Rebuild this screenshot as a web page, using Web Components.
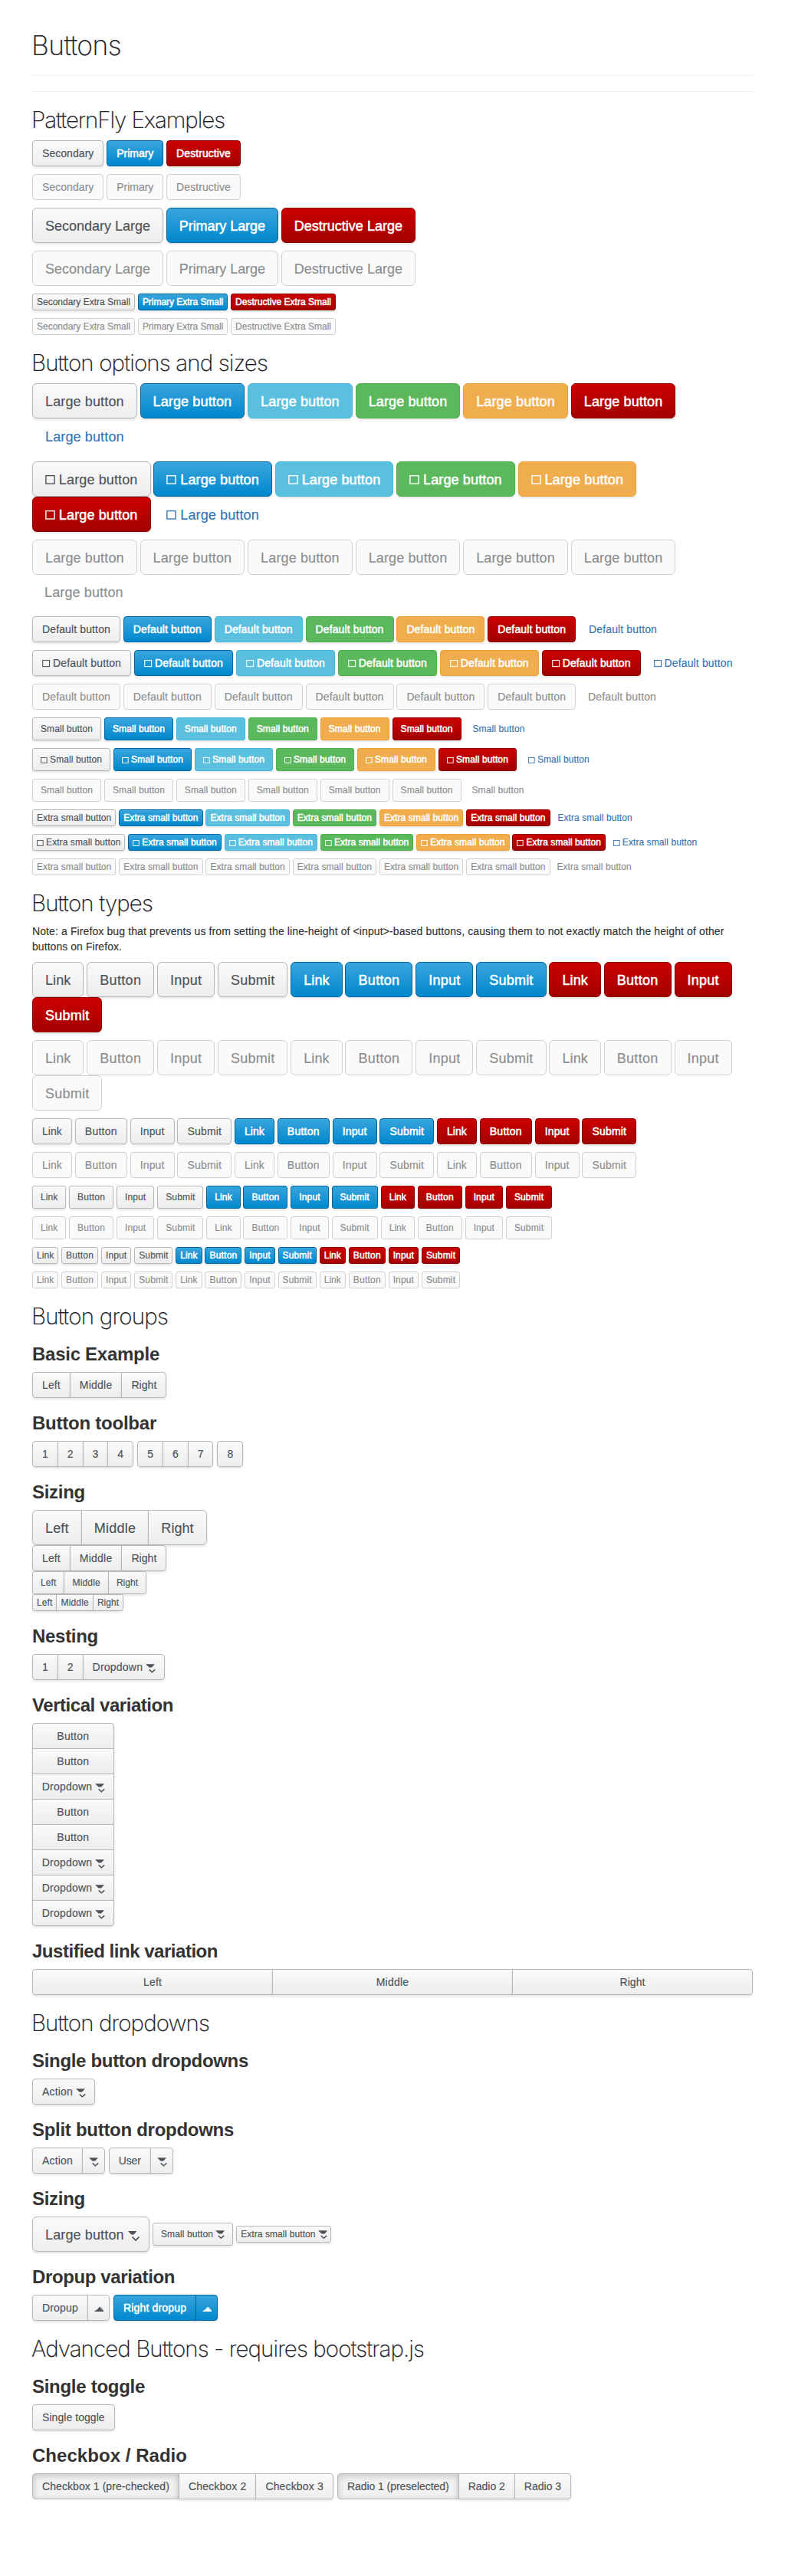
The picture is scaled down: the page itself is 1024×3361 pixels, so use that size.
<!DOCTYPE html>
<html lang="en">
<head>
<meta charset="utf-8">
<title>Buttons</title>
<style>
  body { margin: 0; background: #fff; color: #333; font: 14px/20px "Liberation Sans", Arial, sans-serif; }
</style>
</head>
<body>
<pf-page>
  <pf-heading level="1" w="117">Buttons</pf-heading>
  <pf-rule></pf-rule>

  <pf-heading level="2" w="252">PatternFly Examples</pf-heading>
  <pf-row><pf-button>Secondary</pf-button><pf-button kind="primary">Primary</pf-button><pf-button kind="danger">Destructive</pf-button></pf-row>
  <pf-row><pf-button disabled>Secondary</pf-button><pf-button disabled>Primary</pf-button><pf-button disabled>Destructive</pf-button></pf-row>
  <pf-row><pf-button size="lg">Secondary Large</pf-button><pf-button size="lg" kind="primary">Primary Large</pf-button><pf-button size="lg" kind="danger">Destructive Large</pf-button></pf-row>
  <pf-row><pf-button size="lg" disabled>Secondary Large</pf-button><pf-button size="lg" disabled>Primary Large</pf-button><pf-button size="lg" disabled>Destructive Large</pf-button></pf-row>
  <pf-row><pf-button size="xs">Secondary Extra Small</pf-button><pf-button size="xs" kind="primary">Primary Extra Small</pf-button><pf-button size="xs" kind="danger">Destructive Extra Small</pf-button></pf-row>
  <pf-row><pf-button size="xs" disabled>Secondary Extra Small</pf-button><pf-button size="xs" disabled>Primary Extra Small</pf-button><pf-button size="xs" disabled>Destructive Extra Small</pf-button></pf-row>

  <pf-heading level="2" w="308">Button options and sizes</pf-heading>
  <pf-options size="lg" label="Large button"></pf-options>
  <pf-options size="lg" label="Large button" icon></pf-options>
  <pf-options size="lg" label="Large button" disabled></pf-options>
  <pf-options size="md" label="Default button"></pf-options>
  <pf-options size="md" label="Default button" icon></pf-options>
  <pf-options size="md" label="Default button" disabled></pf-options>
  <pf-options size="sm" label="Small button"></pf-options>
  <pf-options size="sm" label="Small button" icon></pf-options>
  <pf-options size="sm" label="Small button" disabled></pf-options>
  <pf-options size="xs" label="Extra small button"></pf-options>
  <pf-options size="xs" label="Extra small button" icon></pf-options>
  <pf-options size="xs" label="Extra small button" disabled></pf-options>

  <pf-heading level="2" w="158">Button types</pf-heading>
  <pf-note><pf-line>Note: a Firefox bug that prevents us from setting the line-height of &lt;input&gt;-based buttons, causing them to not exactly match the height of other</pf-line> <pf-line>buttons on Firefox.</pf-line></pf-note>
  <pf-types size="lg"></pf-types>
  <pf-types size="lg" disabled></pf-types>
  <pf-types size="md"></pf-types>
  <pf-types size="md" disabled></pf-types>
  <pf-types size="sm"></pf-types>
  <pf-types size="sm" disabled></pf-types>
  <pf-types size="xs"></pf-types>
  <pf-types size="xs" disabled></pf-types>

  <pf-heading level="2" w="178">Button groups</pf-heading>
  <pf-heading level="3" w="166">Basic Example</pf-heading>
  <pf-row flush><pf-group><pf-button>Left</pf-button><pf-button>Middle</pf-button><pf-button>Right</pf-button></pf-group></pf-row>
  <pf-heading level="3" w="162">Button toolbar</pf-heading>
  <pf-row flush wide>
    <pf-group><pf-button>1</pf-button><pf-button>2</pf-button><pf-button>3</pf-button><pf-button>4</pf-button></pf-group>
    <pf-group><pf-button>5</pf-button><pf-button>6</pf-button><pf-button>7</pf-button></pf-group>
    <pf-group><pf-button>8</pf-button></pf-group>
  </pf-row>
  <pf-heading level="3" w="69">Sizing</pf-heading>
  <pf-row flush><pf-group><pf-button size="lg">Left</pf-button><pf-button size="lg">Middle</pf-button><pf-button size="lg">Right</pf-button></pf-group></pf-row>
  <pf-row flush><pf-group><pf-button>Left</pf-button><pf-button>Middle</pf-button><pf-button>Right</pf-button></pf-group></pf-row>
  <pf-row flush><pf-group><pf-button size="sm">Left</pf-button><pf-button size="sm">Middle</pf-button><pf-button size="sm">Right</pf-button></pf-group></pf-row>
  <pf-row flush><pf-group><pf-button size="xs">Left</pf-button><pf-button size="xs">Middle</pf-button><pf-button size="xs">Right</pf-button></pf-group></pf-row>
  <pf-heading level="3" w="86">Nesting</pf-heading>
  <pf-row flush><pf-group><pf-button>1</pf-button><pf-button>2</pf-button><pf-button caret="down">Dropdown</pf-button></pf-group></pf-row>
  <pf-heading level="3" w="184">Vertical variation</pf-heading>
  <pf-row flush><pf-group vertical><pf-button>Button</pf-button><pf-button>Button</pf-button><pf-button caret="down">Dropdown</pf-button><pf-button>Button</pf-button><pf-button>Button</pf-button><pf-button caret="down">Dropdown</pf-button><pf-button caret="down">Dropdown</pf-button><pf-button caret="down">Dropdown</pf-button></pf-group></pf-row>
  <pf-heading level="3" w="242">Justified link variation</pf-heading>
  <pf-group justified><pf-button>Left</pf-button><pf-button>Middle</pf-button><pf-button>Right</pf-button></pf-group>

  <pf-heading level="2" w="232">Button dropdowns</pf-heading>
  <pf-heading level="3" w="282">Single button dropdowns</pf-heading>
  <pf-row flush><pf-button caret="down">Action</pf-button></pf-row>
  <pf-heading level="3" w="263">Split button dropdowns</pf-heading>
  <pf-row flush wide>
    <pf-group><pf-button>Action</pf-button><pf-button caret="down" bare></pf-button></pf-group>
    <pf-group><pf-button>User</pf-button><pf-button caret="down" bare></pf-button></pf-group>
  </pf-row>
  <pf-heading level="3" w="69">Sizing</pf-heading>
  <pf-row flush><pf-button size="lg" caret="down">Large button</pf-button><pf-button size="sm" caret="down">Small button</pf-button><pf-button size="xs" caret="down">Extra small button</pf-button></pf-row>
  <pf-heading level="3" w="186">Dropup variation</pf-heading>
  <pf-row flush wide>
    <pf-group><pf-button>Dropup</pf-button><pf-button caret="up" bare></pf-button></pf-group>
    <pf-group><pf-button kind="primary">Right dropup</pf-button><pf-button kind="primary" caret="up" bare></pf-button></pf-group>
  </pf-row>

  <pf-heading level="2" w="512">Advanced Buttons - requires bootstrap.js</pf-heading>
  <pf-heading level="3" w="147">Single toggle</pf-heading>
  <pf-row flush><pf-button>Single toggle</pf-button></pf-row>
  <pf-heading level="3" w="202">Checkbox / Radio</pf-heading>
  <pf-row flush wide>
    <pf-group><pf-button active>Checkbox 1 (pre-checked)</pf-button><pf-button>Checkbox 2</pf-button><pf-button>Checkbox 3</pf-button></pf-group>
    <pf-group><pf-button active>Radio 1 (preselected)</pf-button><pf-button>Radio 2</pf-button><pf-button>Radio 3</pf-button></pf-group>
  </pf-row>
</pf-page>

<script>
// Advance widths of the interface typeface, in thousandths of an em.
const ADV = {};
const put = (chars, w) => { for (const c of chars) ADV[c] = w; };
put(' .,:;', 278); put('ace', 537); put('J', 519); put('bdpq', 593); put('Lhnu0123456789', 556);
put('ijl', 222); put('f', 296); put('I', 259); put('go', 574); put('FT', 574); put('S', 648);
put('r', 333); put('V', 611); put('svy', 500); put('BR', 685); put('P', 648); put('OQ', 760);
put('CHUN', 722); put('k', 519); put('x', 518); put('z', 480); put('w', 758); put('m', 853);
put('t', 315); put('D', 704); put('E', 611); put('G', 759); put('K', 667); put('M', 871);
put('A', 648); put('()', 259); put('-', 389); put('/', 333); put('<>', 600);

const advance = (text, size) =>
  ([...text].reduce((s, c) => s + (ADV[c] || 556), 0) - (text.includes('rg') ? 20 : 0)) * size / 1000;

// Spreads a text over the given width by letter-spacing.
function track(box, text, width) {
  const now = box.getBoundingClientRect().width;
  if (text.length && now) box.style.letterSpacing = ((width - now) / text.length).toFixed(4) + 'px';
}

class Base extends HTMLElement {
  render(html) {
    if (!this.shadowRoot) this.attachShadow({ mode: 'open' });
    this.shadowRoot.innerHTML = html;
  }
}

customElements.define('pf-page', class extends Base {
  connectedCallback() {
    this.render(`<style>:host{display:flow-root;box-sizing:border-box;width:1024px;height:3361px;padding:0 42px}</style><slot></slot>`);
  }
});

customElements.define('pf-rule', class extends Base {
  connectedCallback() {
    this.render(`<style>:host{display:block;height:20px;border:solid #eee;border-width:1px 0;margin:19px 0 20px}</style>`);
  }
});

customElements.define('pf-row', class extends Base {
  connectedCallback() {
    this.render(`<style>
      :host{display:flex;flex-wrap:wrap;align-items:center;column-gap:3.89px;margin:0 0 10px}
      :host([flush]){margin:0}
      :host([wide]){column-gap:5px}
    </style><slot></slot>`);
  }
});

customElements.define('pf-group', class extends Base {
  connectedCallback() {
    this.render(`<style>
      :host{display:inline-flex}
      ::slotted(:not(:first-child)){margin-left:-1px}
      :host([justified]){display:flex}
      :host([justified]) ::slotted(*){flex:1 1 0}
      :host([vertical]){flex-direction:column;width:106.7px}
      :host([vertical]) ::slotted(:not(:first-child)){margin:-1px 0 0}
    </style><slot></slot>`);
    const kids = [...this.children], v = this.hasAttribute('vertical');
    kids.forEach((k, i) => {
      const a = i === 0, z = i === kids.length - 1;
      k.dataset.edge = a && z ? 'all' : a ? (v ? 'top' : 'left') : z ? (v ? 'bottom' : 'right') : 'none';
    });
  }
});

const SIZES = { lg: 18, md: 14, sm: 12, xs: 12 };

const SQUARE = `<svg class="sq" viewBox="0 0 13 12" preserveAspectRatio="none"><rect x=".9" y=".65" width="11.3" height="10.7" fill="none" stroke="currentColor" stroke-width="1.4"/></svg>`;
const DOWN = {
  lg: `<svg class="caret" viewBox="0 0 15 13" style="width:15px;height:13px;margin-right:-3.6px;margin-top:4px"><path d="M0 0H11.4L7.6 4.4H4.3Z" fill="currentColor"/><path d="M5.7 7.6L10 12L14.4 7.6" fill="none" stroke="currentColor" stroke-width="1.7"/></svg>`,
  md: `<svg class="caret" viewBox="0 0 13 12" style="width:13px;height:12px;margin-right:-1.3px;margin-top:3px"><path d="M0 .3H12L9 3.6L8 4.6H4.6Z" fill="currentColor"/><path d="M4.7 7.4L8.3 10.8L12.3 7.4" fill="none" stroke="currentColor" stroke-width="1.5"/></svg>`,
  sm: `<svg class="caret" viewBox="0 0 12 11" style="width:12px;height:11px"><path d="M0 .3H12L8.6 4.6H4.6Z" fill="currentColor"/><path d="M3.7 6.9L7.4 10.2L11.2 6.9" fill="none" stroke="currentColor" stroke-width="1.4"/></svg>`,
  xs: `<svg class="caret" viewBox="0 0 12 11" style="width:12px;height:11px;margin-right:-1.3px"><path d="M0 .3H12L8.6 4.6H4.6Z" fill="currentColor"/><path d="M3.7 6.9L7.4 10.2L11.2 6.9" fill="none" stroke="currentColor" stroke-width="1.4"/></svg>`
};
const UP = `<svg class="caret" viewBox="0 0 12 6" style="width:12px;height:6px;margin-right:-1px;margin-top:4px"><path d="M0 6L1.8 4.2L4 3.2L6.3 .2L8.6 .4L10.2 2.6L12 4.4V6Z" fill="currentColor"/><path d="M8.2 1.8L10.6 4.2" stroke="var(--bg)" stroke-width=".6"/></svg>`;

customElements.define('pf-button', class extends Base {
  connectedCallback() {
    const size = this.getAttribute('size') || 'md', dir = this.getAttribute('caret');
    const bare = this.hasAttribute('bare');
    const caret = dir === 'up' ? UP : dir ? DOWN[size] : '';
    this.render(`<style>
      :host{display:inline-flex;flex:none;box-sizing:border-box;align-items:center;justify-content:center;white-space:nowrap;
        --rad:4px;--bg:#f3f3f3;--ink:.15px;height:34px;padding:0 12px;font-size:14px;line-height:20px;border:1px solid #b7b7b7;border-radius:var(--rad);
        color:#4d5258;background:linear-gradient(#fafafa,#ededed);box-shadow:0 2px 3px rgba(0,0,0,.1)}
      span{-webkit-text-stroke:var(--ink) currentColor}
      :host([size=lg]){height:46px;padding:1px 16px 0;font-size:18px;line-height:24px;--rad:6px}
      :host([size=sm]){height:30px;padding:0 10px;font-size:12px;line-height:18px;--rad:3px}
      :host([size=xs]){height:22px;padding:0 5px;font-size:12px;line-height:18px;--rad:3px}
      :host([kind]){color:#fff;--ink:.5px}
      :host([kind=primary]){--bg:#1c97d6;border-color:#00659c;background:linear-gradient(#39a5dc,#0088ce)}
      :host([kind=danger]){border-color:#8b0000;background:linear-gradient(#c00,#a30000)}
      :host([kind=info]){border-color:#46b8da;background:#5bc0de}
      :host([kind=success]){border-color:#4cae4c;background:#5cb85c}
      :host([kind=warning]){border-color:#eea236;background:#f0ad4e}
      :host([kind=link]){color:#3474b4;background:none;border-color:transparent;box-shadow:none;--ink:.15px}
      :host([disabled]){color:#8b8d8f;background:#fafafa;border-color:#d1d1d1;box-shadow:none;--ink:.15px}
      :host([disabled][kind=link]){background:none;border:0;height:32px}
      :host([disabled][kind=link][size=lg]){height:44px}
      :host([disabled][kind=link][size=sm]){height:28px}
      :host([disabled][kind=link][size=xs]){height:20px}
      :host([active]){background:#f1f1f1;box-shadow:inset 0 2px 8px rgba(0,0,0,.2)}
      :host([bare]){padding:0 8px}
      :host([data-edge=none]){border-radius:0}
      :host([data-edge=left]){border-radius:var(--rad) 0 0 var(--rad)}
      :host([data-edge=right]){border-radius:0 var(--rad) var(--rad) 0}
      :host([data-edge=top]){border-radius:var(--rad) var(--rad) 0 0}
      :host([data-edge=bottom]){border-radius:0 0 var(--rad) var(--rad)}
      :host([data-edge=all]){border-radius:var(--rad)}
      svg{display:block;flex:none;overflow:visible}
      .sq{width:.728em;height:.65em;margin:1.5px .278em 0 0}
      :host([size=lg]) .sq{width:.714em;margin-top:.5px}
      span + .caret{margin-left:.278em}
    </style>${this.hasAttribute('icon') ? SQUARE : ''}${bare ? '' : '<span><slot></slot></span>'}${caret}`);
    if (!bare) {
      const text = this.textContent.trim();
      track(this.shadowRoot.querySelector('span'), text, advance(text, SIZES[size]));
    }
  }
});

customElements.define('pf-options', class extends Base {
  connectedCallback() {
    const flags = (this.hasAttribute('icon') ? ' icon' : '') + (this.hasAttribute('disabled') ? ' disabled' : '');
    const size = this.getAttribute('size'), label = this.getAttribute('label');
    this.render(`<style>:host{display:block}</style><pf-row>${['', 'primary', 'info', 'success', 'warning', 'danger', 'link']
      .map(k => `<pf-button size="${size}"${k ? ` kind="${k}"` : ''}${flags}>${label}</pf-button>`).join('')}</pf-row>`);
  }
});

customElements.define('pf-types', class extends Base {
  connectedCallback() {
    const off = this.hasAttribute('disabled') ? ' disabled' : '', size = this.getAttribute('size');
    this.render(`<style>:host{display:block}</style><pf-row>${['', 'primary', 'danger'].map(k => ['Link', 'Button', 'Input', 'Submit']
      .map(t => `<pf-button size="${size}"${k ? ` kind="${k}"` : ''}${off}>${t}</pf-button>`).join('')).join('')}</pf-row>`);
  }
});

customElements.define('pf-note', class extends Base {
  connectedCallback() {
    this.render(`<style>:host{display:block;margin:0 0 10px}</style><slot></slot>`);
  }
});

customElements.define('pf-line', class extends Base {
  connectedCallback() {
    this.render(`<style>:host{display:block;white-space:nowrap} span{-webkit-text-stroke:.15px currentColor}</style><span><slot></slot></span>`);
    const text = this.textContent;
    track(this.shadowRoot.querySelector('span'), text, text.length > 60 ? 902.5 : 117);
  }
});

customElements.define('pf-heading', class extends Base {
  connectedCallback() {
    const n = this.getAttribute('level');
    this.render(`<style>
      :host{display:block}
      h1,h2,h3{margin:0;white-space:nowrap}
      h1,h2{font-family:Inter,"Liberation Sans",sans-serif;font-weight:200;text-indent:-1px;color:#1d2126;-webkit-text-stroke:.2px currentColor}
      h1{font-size:35.4px;line-height:39px}
      h2{font-size:29.5px;line-height:33px}
      h3{font-size:24px;line-height:26px;font-weight:700;color:#333}
      :host([level="1"]){margin:40px 0 10px}
      :host([level="2"]),:host([level="3"]){margin:20px 0 10px}
    </style><h${n}><span><slot></slot></span></h${n}>`);
    track(this.shadowRoot.querySelector('span'), this.textContent, +this.getAttribute('w'));
  }
});
</script>
</body>
</html>
